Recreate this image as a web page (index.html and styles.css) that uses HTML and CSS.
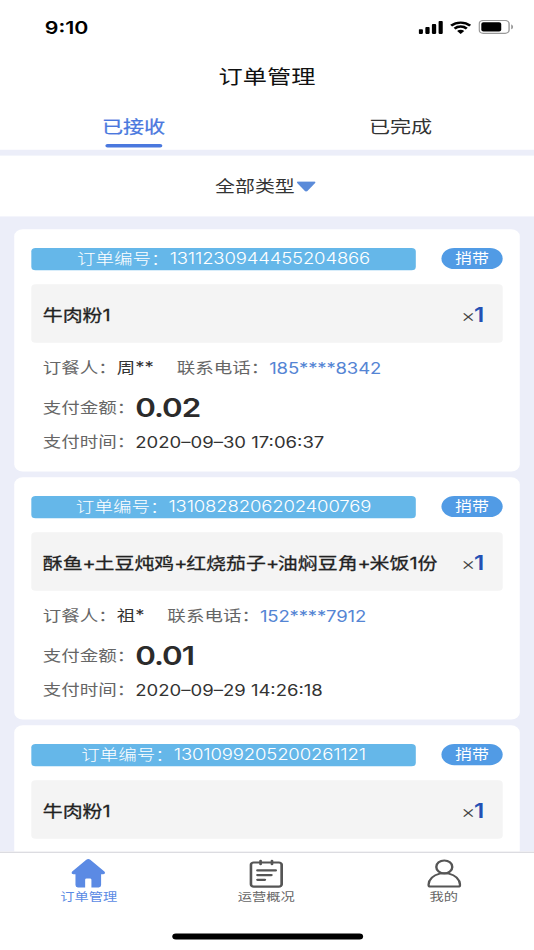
FILE: index.html
```html
<!DOCTYPE html>
<html lang="zh-CN">
<head>
<meta charset="utf-8">
<title>订单管理</title>
<link rel="stylesheet" href="styles.css">
</head>
<body>
<div class="phone">
  <header class="status">
    <span class="clock">9:10</span>
    <div class="signals">
      <svg class="cell" viewBox="0 0 17 11"><rect x="0" y="7" width="3" height="4" rx=".7"/><rect x="4.7" y="5" width="3" height="6" rx=".7"/><rect x="9.3" y="2.6" width="3" height="8.4" rx=".7"/><rect x="14" y="0" width="3" height="11" rx=".7"/></svg>
      <svg class="wifi" viewBox="0 0 15 11"><path d="M.8 3.9C4.6.4 10.4.4 14.2 3.9M3.2 6.4c2.5-2.3 6.1-2.3 8.6 0" fill="none" stroke="#000" stroke-width="2"/><path d="M7.5 11 5 8.500c1.400-1.300 3.600-1.300 5 0z"/></svg>
      <svg class="battery" viewBox="0 0 25 12"><rect x=".5" y=".5" width="21" height="11" rx="2.8" fill="none" stroke="#999"/><rect x="2" y="2" width="14" height="8" rx="1.5"/><path d="M23 4v4c.8-.3 1.3-1.1 1.3-2S23.800 4.300 23 4z" fill="#999"/></svg>
    </div>
  </header>
  <h1 class="title">订单管理</h1>
  <nav class="tabs">
    <div class="tab active"><span>已接收</span></div>
    <div class="tab"><span>已完成</span></div>
  </nav>
  <div class="filter"><span>全部类型</span><svg class="caret" viewBox="0 0 14 9"><path d="M1 .2h12q.9.400.3 1.200L7.900 8.200q-.9.900-1.800 0L.7 1.400Q.1.500 1 .2z"/></svg></div>

  <main class="list">
    <article class="card">
      <div class="head"><div class="number">订单编号：<span class="digits">1311230944455204866</span></div><span class="badge">捎带</span></div>
      <div class="item"><span class="dish">牛肉粉1</span><span class="qty"><i>×</i>1</span></div>
      <div class="row person"><span>订餐人：</span><b class="who">周**</b><span>联系电话：</span><a class="tel">185****8342</a></div>
      <div class="row pay"><span>支付金额：</span><b class="amount">0.02</b></div>
      <div class="row when"><span>支付时间：</span><b class="date">2020–09–30 17:06:37</b></div>
    </article>
    <article class="card">
      <div class="head"><div class="number">订单编号：<span class="digits">1310828206202400769</span></div><span class="badge">捎带</span></div>
      <div class="item"><span class="dish">酥鱼<i>+</i>土豆炖鸡<i>+</i>红烧茄子<i>+</i>油焖豆角<i>+</i>米饭1份</span><span class="qty"><i>×</i>1</span></div>
      <div class="row person"><span>订餐人：</span><b class="who">祖*</b><span>联系电话：</span><a class="tel">152****7912</a></div>
      <div class="row pay"><span>支付金额：</span><b class="amount">0.01</b></div>
      <div class="row when"><span>支付时间：</span><b class="date">2020–09–29 14:26:18</b></div>
    </article>
    <article class="card">
      <div class="head"><div class="number">订单编号：<span class="digits">1301099205200261121</span></div><span class="badge">捎带</span></div>
      <div class="item"><span class="dish">牛肉粉1</span><span class="qty"><i>×</i>1</span></div>
    </article>
  </main>

  <footer class="bottom">
    <div class="menu">
      <div class="entry current">
        <svg viewBox="0 0 24 25"><path d="M10.600.8q1.400-1.100 2.800 0L23.300 11q1.200 1.900-.8 2.300H21V22.500q0 2-1.700 2H14.200V18q0-1.200-1-1.200h-2.400q-1 0-1 1.200v6.500H4.700Q3 24.500 3 22.500V13.300H1.500Q-.5 12.900.7 11z" fill="#5b8ae4"/></svg>
        <span>订单管理</span>
      </div>
      <div class="entry">
        <svg viewBox="0 0 24 25" fill="none" stroke="#555" stroke-width="1.900" stroke-linecap="round"><rect x="1.200" y="3.200" width="21.600" height="20.600" rx="2"/><path d="M8 1.800v2.800M16 1.800v2.800M5.800 10h12.800M5.800 14h9.800M5.800 18h5.200"/></svg>
        <span>运营概况</span>
      </div>
      <div class="entry">
        <svg viewBox="0 0 24 25" fill="none" stroke="#555" stroke-width="1.700" stroke-linejoin="round"><circle cx="12" cy="7" r="5.600"/><path d="M8.800 12.700C4.500 14 1.200 17.500.9 22.200q0 1.600 1.400 1.600h19.400q1.400 0 1.400-1.600C22.800 17.500 19.500 14 15.200 12.700q-3.200-.8-6.400 0"/></svg>
        <span>我的</span>
      </div>
    </div>
    <div class="indicator"></div>
  </footer>
</div>
</body>
</html>
```
FILE: styles.css
```css
* { box-sizing: border-box; }
html, body { margin: 0; width: 534px; height: 950px; overflow: hidden; background: #fff; }
/* 375x812 canvas fitted to the window */
.phone {
  width: 375px; height: 812px;
  transform: scale(1.424, 1.16995); transform-origin: 0 0;
  display: flex; flex-direction: column; overflow: hidden;
  background: #fff; color: #333;
  font-family: Inter, "Noto Sans CJK SC", sans-serif;
  font-size: 13px; white-space: nowrap;
}
i { font-style: normal; }
.status { height: 46px; flex: none; display: flex; align-items: center; justify-content: space-between; padding: 0 14.300px 0 31.500px; }
.clock { color: #000; font-size: 15px; font-weight: 600; }
.signals { display: flex; align-items: center; gap: 5px; }
.cell { width: 17px; height: 11px; }
.wifi { width: 15px; height: 11px; }
.battery { width: 25px; height: 12px; }
.title { margin: 0; height: 40px; flex: none; line-height: 41px; text-align: center; color: #111; font-size: 17px; font-weight: 400; }
.tabs { height: 42px; flex: none; display: flex; }
.tab { flex: 1; display: flex; flex-direction: column; align-items: center; font-size: 14.800px; line-height: 20px; padding-top: 12.700px; }
.tab.active { color: #4a78de; -webkit-text-stroke: .2px currentColor; }
.tab.active::after { content: ""; width: 40px; height: 3px; border-radius: 1.500px; margin-top: 4px; background: #4a78de; }
.filter { height: 57px; flex: none; border-top: 5px solid #eceef9; display: flex; align-items: center; justify-content: center; gap: 1px; font-size: 14px; padding: 0 2px 0 0; }
.filter span { padding-bottom: 2px; }
.caret { width: 14px; height: 9px; fill: #5b8bd9; }
.list { flex: 1; min-height: 0; overflow: hidden; background: #eceef9; padding: 11px 10px 0; display: flex; flex-direction: column; gap: 5px; }
.card { height: 207px; flex: none; background: #fff; border-radius: 6px; padding: 16px 12px 0; }
.head { display: flex; justify-content: space-between; align-items: flex-start; }
.number { width: 270px; height: 19px; line-height: 19.500px; border-radius: 3px; background: #65b7e9; color: #fff; text-align: center; font-weight: 300; }
.digits { letter-spacing: -.1px; }
.badge { width: 43px; height: 18px; line-height: 17.500px; border-radius: 9px; background: #519be5; color: #fff; text-align: center; font-size: 11.900px; }
.item { margin-top: 12px; height: 50px; border-radius: 3px; background: #f4f4f4; display: flex; align-items: center; justify-content: space-between; padding: 0 13px 0 8px; }
.dish { font-size: 14px; color: #222; -webkit-text-stroke: .22px currentColor; padding-bottom: .5px; }
.dish i { letter-spacing: -.8px; margin-right: -.1px; }
.qty { color: #2350b4; font-size: 17px; font-weight: 600; padding-top: 1.500px; }
.qty i { font-weight: 300; font-size: 15.500px; color: #444; margin-right: -1px; }
.row { display: flex; align-items: center; padding-left: 8px; color: #666; height: 28px; }
.row b { color: #333; font-weight: 400; }
.person { margin-top: 6.400px; }
.pay { height: 40px; }
.when { margin-top: -5px; }
.who { margin-right: 16px; }
.row .tel, .row .date { padding-top: 2.500px; }
.tel { color: #5585d4; letter-spacing: -.1px; }
.row .amount { font-size: 22px; font-weight: 600; color: #2b2b2b; letter-spacing: -.75px; padding-top: 1px; }
.bottom { height: 84px; flex: none; border-top: 1px solid #d9d9de; background: #fff; display: flex; flex-direction: column; align-items: center; justify-content: space-between; padding-bottom: 9px; }
.menu { display: flex; width: 100%; padding: 5px 1px 0 0; }
.entry { flex: 1; display: flex; flex-direction: column; align-items: center; color: #666; font-size: 10px; line-height: 14px; }
.entry svg { width: 24px; height: 25px; }
.current { color: #5b8ae4; }
.indicator { width: 134px; height: 5px; border-radius: 3px; background: #000; }
```
